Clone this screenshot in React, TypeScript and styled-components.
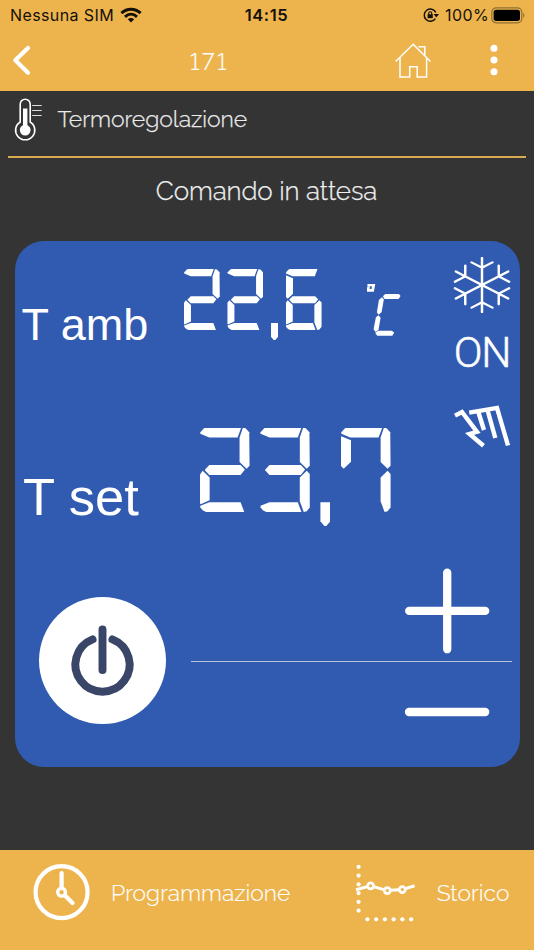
import React from 'react';
import styled, { createGlobalStyle } from 'styled-components';

const GlobalStyle = createGlobalStyle`
  * { box-sizing: border-box; }
  html, body { margin: 0; background: #343434; }
`;

const LIGHT = "Raleway, Lato, 'Open Sans', sans-serif";
const SYSTEM = "Inter, 'Liberation Sans', sans-serif";
const PANEL = "'Liberation Sans', Arial, sans-serif";

const Screen = styled.main`
  display: flex;
  flex-direction: column;
  width: 534px;
  height: 950px;
  overflow: hidden;
  background: #343434;
  color: #fff;
  font-family: ${LIGHT};
`;

const TopArea = styled.header`
  height: 91px;
  flex: none;
  background: #edb44e;
`;

const StatusBar = styled.div`
  display: grid;
  grid-template-columns: 1fr auto 1fr;
  align-items: center;
  height: 30px;
  padding: 0 9px 0 10px;
  color: #14100a;
  font: 400 16px/30px ${SYSTEM};
`;

const StatusGroup = styled.div<{ $end?: boolean }>`
  display: flex;
  align-items: center;
  gap: ${p => (p.$end ? 0 : 6)}px;
  justify-content: ${p => (p.$end ? 'flex-end' : 'flex-start')};
`;

const StatusText = styled.span<{ $spacing: number }>`
  letter-spacing: ${p => p.$spacing}px;
  white-space: nowrap;
`;

const Clock = styled.time`
  margin-right: 2px;
  font-weight: 600;
  font-size: 16.5px;
  letter-spacing: 0.6px;
`;

const LockIcon = styled.svg`
  margin-right: 6px;
`;

const BatteryIcon = styled.svg`
  margin-left: 2px;
`;

const NavBar = styled.nav`
  display: flex;
  align-items: center;
  height: 61px;
  padding: 0 33px 0 12px;
`;

const NavTitle = styled.h1`
  flex: 1;
  margin: 0 0 0 158px;
  font-weight: 300;
  font-size: 24px;
  line-height: 61px;
  letter-spacing: 2.6px;
  padding-top: 1px;
  font-variant-numeric: lining-nums tabular-nums;
  -webkit-text-stroke: 0.2px #fff;
`;

const HomeIcon = styled.svg`
  margin-right: 56px;
`;

const Section = styled.section`
  display: flex;
  align-items: center;
  flex: none;
  height: 67px;
  margin: 0 8px;
  padding: 0 0 9px 6px;
  border-bottom: 2px solid #d9ab51;
`;

const SectionTitle = styled.h2`
  margin: 0 0 0 15.5px;
  font-weight: 300;
  font-size: 23px;
  line-height: 30px;
  letter-spacing: -0.05px;
  color: #ececec;
  -webkit-text-stroke: 0.25px #ececec;
`;

const Message = styled.p`
  flex: none;
  margin: 14px 1px 31px 0;
  text-align: center;
  font-weight: 300;
  font-size: 26px;
  line-height: 38px;
  letter-spacing: -0.1px;
  color: #f0f0f0;
  -webkit-text-stroke: 0.25px #f0f0f0;
`;

const Panel = styled.section`
  flex: none;
  width: 505px;
  height: 526px;
  margin-left: 14.5px;
  border-radius: 29px;
  background: #305bb1;
`;

const Readings = styled.div`
  display: flex;
  height: 326px;
`;

const ReadingList = styled.div`
  width: 430px;
`;

const Reading = styled.div<{ $top: number; $left: number; $height: number }>`
  display: flex;
  align-items: flex-start;
  height: ${p => p.$height}px;
  padding: ${p => p.$top}px 0 0 ${p => p.$left}px;
`;

const ReadingLabel = styled.div<{ $size: number; $width: number; $drop: number }>`
  width: ${p => p.$width}px;
  margin-top: ${p => p.$drop}px;
  font: 400 ${p => p.$size}px/1 ${PANEL};
  white-space: nowrap;
`;

const Lcd = styled.div<{ $gap: number }>`
  display: flex;
  gap: ${p => p.$gap}px;
`;

const Cell = styled.span<{ $w: number; $h: number }>`
  display: grid;
  width: ${p => p.$w}px;
  height: ${p => p.$h}px;
`;

const Segment = styled.i<{ $shape: string }>`
  grid-area: 1 / 1;
  background: #fff;
  clip-path: polygon(${p => p.$shape});
`;

const UnitCell = styled(Cell)`
  margin: 15px 0 0 45px;
`;

const Modes = styled.div`
  display: flex;
  flex-direction: column;
  align-items: center;
  width: 75px;
  padding: 16px 0 0 0;
`;

const ModeText = styled.div`
  width: 60px;
  height: 30px;
  margin: 25px 0 37px;
  font: 300 42.5px/30px Roboto, sans-serif;
  letter-spacing: -1.2px;
  text-align: center;
  white-space: nowrap;
  -webkit-text-stroke: 0.5px #fff;
`;

const Controls = styled.div`
  display: flex;
  height: 200px;
`;

const PowerButton = styled.button`
  width: 127.5px;
  height: 127.5px;
  margin: 29.5px 24.5px 0 24px;
  padding: 0;
  border: 0;
  border-radius: 50%;
  background: #fff;
`;

const Steps = styled.div`
  display: flex;
  flex-direction: column;
  width: 321.5px;
`;

const StepButton = styled.button<{ $height: number }>`
  display: flex;
  align-items: flex-start;
  justify-content: flex-end;
  height: ${p => p.$height}px;
  padding: 0 22px 0 0;
  border: 0;
  background: none;
`;

const Divider = styled.hr`
  width: 100%;
  height: 1.5px;
  margin: 0;
  border: 0;
  background: #b9c3da;
`;

const Footer = styled.footer`
  display: flex;
  align-items: center;
  height: 100px;
  flex: none;
  margin-top: auto;
  padding: 0 24.5px 14px 32px;
  background: #edb44e;
`;

const FooterItem = styled.div<{ $gap: number; $push?: boolean }>`
  display: flex;
  align-items: center;
  gap: ${p => p.$gap}px;
  margin-left: ${p => (p.$push ? 'auto' : 0)};
`;

const FooterLabel = styled.span<{ $spacing: number }>`
  font-weight: 300;
  font-size: 22.8px;
  line-height: 32px;
  letter-spacing: ${p => p.$spacing}px;
  -webkit-text-stroke: 0.15px #fff;
`;

type Point = [number, number];

const toPolygon = (points: Point[], w: number, h: number) =>
  points.map(([x, y]) => `${((x / w) * 100).toFixed(2)}% ${((y / h) * 100).toFixed(2)}%`).join(', ');

/* Segment geometry on a 149 x 254 cell. */
const segmentPoints = (lit: string): Record<string, Point[]> => {
  const topEnd = lit.includes('b') ? 124 : 132;
  const bottomEnd = lit.includes('c') ? 124 : 133;
  return {
    a: [[1, 14], [12, 2], [18, 0], [topEnd, 0], [topEnd - 11, 30], [28, 30], [1, 19]],
    b: [[129, 1], [137, 2], [148, 14], [149, 115], [140, 124], [119, 104], [119, 30]],
    c: [[140, 130], [149, 140], [149, 240], [140, 252], [131, 254], [119, 222], [119, 150]],
    d: [[1, 235], [28, 225], [bottomEnd - 11, 225], [bottomEnd, 254], [18, 254], [8, 249], [1, 240]],
    e: [[8, 130], [29, 150], [29, 219], [2, 231], [0, 228], [0, 141]],
    f: [[0, 27], [3, 27], [30, 38], [30, 103], [8, 124], [0, 116]],
    g: [[14, 128], [28, 113], [122, 113], [135, 126], [122, 143], [28, 143]],
  };
};

const LIT: Record<string, string> = {
  '2': 'abdeg',
  '3': 'abcdg',
  '6': 'acdefg',
  '7': 'abcf',
};

const COMMA: Point[] = [[0, 225], [30, 225], [30, 282], [18, 296], [12, 296], [0, 282]];

function LcdNumber({ value, height }: { value: string; height: number }) {
  const scale = height / 254;
  return (
    <Lcd $gap={32 * scale} role="img" aria-label={value}>
      {value.split('').map((ch, i) =>
        ch === ',' ? (
          <Cell key={i} $w={30 * scale} $h={296 * scale}>
            <Segment $shape={toPolygon(COMMA, 30, 296)} />
          </Cell>
        ) : (
          <Cell key={i} $w={149 * scale} $h={height}>
            {LIT[ch].split('').map(s => (
              <Segment key={s} $shape={toPolygon(segmentPoints(LIT[ch])[s], 149, 254)} />
            ))}
          </Cell>
        )
      )}
    </Lcd>
  );
}

const UNIT_SHAPES: Point[][] = [
  [[3, 0], [26, 0], [22, 23], [0, 23], [2, 8], [10, 7], [9, 15], [15, 15], [16, 7], [2, 7]],
  [[49, 37], [56, 30], [97, 30], [102, 36], [96, 45], [54, 45]],
  [[46, 40], [52, 46], [45, 85], [36, 92], [31, 85], [37, 48]],
  [[36, 94], [42, 101], [36, 137], [27, 144], [21, 136], [28, 100]],
  [[26, 147], [34, 140], [76, 140], [83, 146], [77, 155], [32, 155]],
];

export default function App() {
  return (
    <>
      <GlobalStyle />
      <Screen>
        <TopArea>
          <StatusBar>
            <StatusGroup>
              <StatusText $spacing={0.4}>Nessuna SIM</StatusText>
              <svg width="22" height="16" viewBox="0 0 22 16" fill="none" stroke="#14100a" strokeWidth="3">
                <path d="M1.4 6.2C7 .8 15 .8 20.6 6.2" />
                <path d="M5 9.8c3.6-3.3 8.4-3.3 12 0" />
                <path d="M7.8 12.2c2-1.7 4.4-1.7 6.4 0L11 15.5z" fill="#14100a" stroke="none" />
              </svg>
            </StatusGroup>
            <Clock>14:15</Clock>
            <StatusGroup $end>
              <LockIcon width="16" height="16" viewBox="0 0 16 16" fill="none" stroke="#14100a" strokeWidth="1.5">
                <path d="M12.4 11.6A6.1 6.1 0 1 1 12.8 5.4" />
                <path d="M10.6 7H16l-2.7 3.4z" fill="#14100a" stroke="none" />
                <path d="M4.6 7.2h5.2v4H4.6z" fill="#14100a" stroke="none" />
                <path d="M5.7 7.5V6.2a1.5 1.5 0 0 1 3 0v1.3" strokeWidth="1.1" />
              </LockIcon>
              <StatusText $spacing={0.4}>100%</StatusText>
              <BatteryIcon width="34" height="17" viewBox="0 0 34 17">
                <rect x=".8" y=".8" width="30" height="15" rx="4.4" fill="none" stroke="#8e6e33" strokeWidth="1.2" />
                <rect x="2.6" y="2.7" width="26.4" height="11.2" rx="2.6" fill="#000" />
                <path d="M32.2 6c1.6.7 1.6 4 0 4.7z" fill="#8e6e33" />
              </BatteryIcon>
            </StatusGroup>
          </StatusBar>
          <NavBar>
            <svg width="20" height="32" viewBox="0 0 20 32" fill="none" stroke="#fff" strokeWidth="4.2" strokeLinecap="round" strokeLinejoin="round">
              <path d="M16 3 3.3 15.3 16 27.7" />
            </svg>
            <NavTitle>171</NavTitle>
            <HomeIcon width="36" height="36" viewBox="0 0 36 36" fill="none" stroke="#fff" strokeWidth="1.5">
              <path d="M.6 18.5 18.2 1.3 35.5 18.5" />
              <path d="M5 14.5v19.6h9.7V23.8h7.5v10.3h9.4V14.5" />
              <path d="M23.5 3.7h6.3v8.5" />
            </HomeIcon>
            <svg width="14" height="34" viewBox="0 0 14 34" fill="#fff">
              <circle cx="7" cy="4.3" r="3.5" />
              <circle cx="7" cy="16" r="3.5" />
              <circle cx="7" cy="27.8" r="3.5" />
            </svg>
          </NavBar>
        </TopArea>

        <Section>
          <svg width="28" height="44" viewBox="0 0 28 44" fill="none" stroke="#fff" strokeWidth="1.6">
            <path d="M6.2 25V7.2a5 5 0 0 1 10 0V25a9.6 9.6 0 1 1-10 0z" />
            <circle cx="11.2" cy="33.1" r="5.4" fill="#fff" stroke="none" />
            <path d="M11.2 11.5V31.5" strokeWidth="4.4" />
            <path d="M18.2 8.5h9.5M18.2 13.5h9.5M18.2 18.5h9.5" strokeWidth="1" stroke="#ddd" />
          </svg>
          <SectionTitle>Termoregolazione</SectionTitle>
        </Section>

        <Message>Comando in attesa</Message>

        <Panel>
          <Readings>
            <ReadingList>
              <Reading $top={28} $left={7} $height={186}>
                <ReadingLabel $size={45} $width={162.5} $drop={33}>T amb</ReadingLabel>
                <LcdNumber value="22,6" height={61} />
                <UnitCell $w={34} $h={52} role="img" aria-label="°C">
                  {UNIT_SHAPES.map((shape, i) => (
                    <Segment key={i} $shape={toPolygon(shape, 102, 156)} />
                  ))}
                </UnitCell>
              </Reading>
              <Reading $top={0.5} $left={8.5} $height={140}>
                <ReadingLabel $size={52.5} $width={177} $drop={43.5}>T set</ReadingLabel>
                <LcdNumber value="23,7" height={84.5} />
              </Reading>
            </ReadingList>
            <Modes>
              <svg width="58" height="56" viewBox="-29 -28 58 56" fill="none" stroke="#fff" strokeWidth="2.2" strokeLinecap="round">
                <g transform="scale(1.12 1)">
                  {[0, 60, 120, 180, 240, 300].map(angle => (
                    <path key={angle} transform={`rotate(${angle})`} d="M0 0V-27M-9.3-22.6 0-17.3 9.3-22.6" />
                  ))}
                </g>
              </svg>
              <ModeText>ON</ModeText>
              <svg width="58" height="44" viewBox="0 0 58 44" fill="none" stroke="#fff" strokeWidth="4.4">
                <path d="M2 10.6 9 7 24 26.8 16.5 29 30.5 40.8" />
                <path d="M16.2 7.6 44 2.9 55 40.5" />
                <path d="M25 6 31 25" />
                <path d="M34.5 5 42.3 33" />
              </svg>
            </Modes>
          </Readings>
          <Controls>
            <PowerButton aria-label="Power">
              <svg width="127" height="127" viewBox="0 0 128 128" fill="none" stroke="#394668" strokeWidth="8" strokeLinecap="round">
                <path d="M54 42.7a27.3 27.3 0 1 0 20 0" />
                <path d="M64 32.8V73.5" />
              </svg>
            </PowerButton>
            <Steps>
              <StepButton $height={93.5} aria-label="Aumenta">
                <svg width="86" height="88" viewBox="0 0 86 88" stroke="#fff" strokeWidth="8.3" strokeLinecap="round">
                  <path d="M43.2 5.6V82.2M5.2 43.9H81.2" />
                </svg>
              </StepButton>
              <Divider />
              <StepButton $height={100} aria-label="Diminuisci">
                <svg width="86" height="100" viewBox="0 0 86 100" stroke="#fff" strokeWidth="8.3" strokeLinecap="round">
                  <path d="M5 50H81.2" />
                </svg>
              </StepButton>
            </Steps>
          </Controls>
        </Panel>

        <Footer>
          <FooterItem $gap={20}>
            <svg width="59" height="58" viewBox="0 0 59 58" fill="none" stroke="#fff" strokeWidth="4.2" strokeLinecap="round">
              <circle cx="29.6" cy="28.2" r="26" />
              <circle cx="29.6" cy="28.2" r="3.9" strokeWidth="3.4" />
              <path d="M29.6 23.5V9" />
              <path d="M33 31.6 40.5 39" />
            </svg>
            <FooterLabel $spacing={0.05}>Programmazione</FooterLabel>
          </FooterItem>
          <FooterItem $gap={21} $push>
            <svg width="62" height="58" viewBox="0 0 62 58">
              <g fill="#fff">
                {[0, 1, 2, 3, 4, 5].map(i => (
                  <circle key={`v${i}`} cx="4.6" cy={2.8 + i * 8.75} r="2.1" />
                ))}
                {[0, 1, 2, 3, 4, 5].map(i => (
                  <circle key={`h${i}`} cx={13.4 + i * 8.75} cy="55.3" r="2.1" />
                ))}
              </g>
              <path d="M2 25.8 16.6 21.8 33.3 26.6 48.3 25.6 60.6 21.8" fill="none" stroke="#fff" strokeWidth="3" />
              <g fill="#edb44e" stroke="#fff" strokeWidth="2.7">
                <circle cx="16.6" cy="21.8" r="3" />
                <circle cx="33.3" cy="26.6" r="3" />
                <circle cx="48.3" cy="25.6" r="3" />
              </g>
            </svg>
            <FooterLabel $spacing={0.05}>Storico</FooterLabel>
          </FooterItem>
        </Footer>
      </Screen>
    </>
  );
}
